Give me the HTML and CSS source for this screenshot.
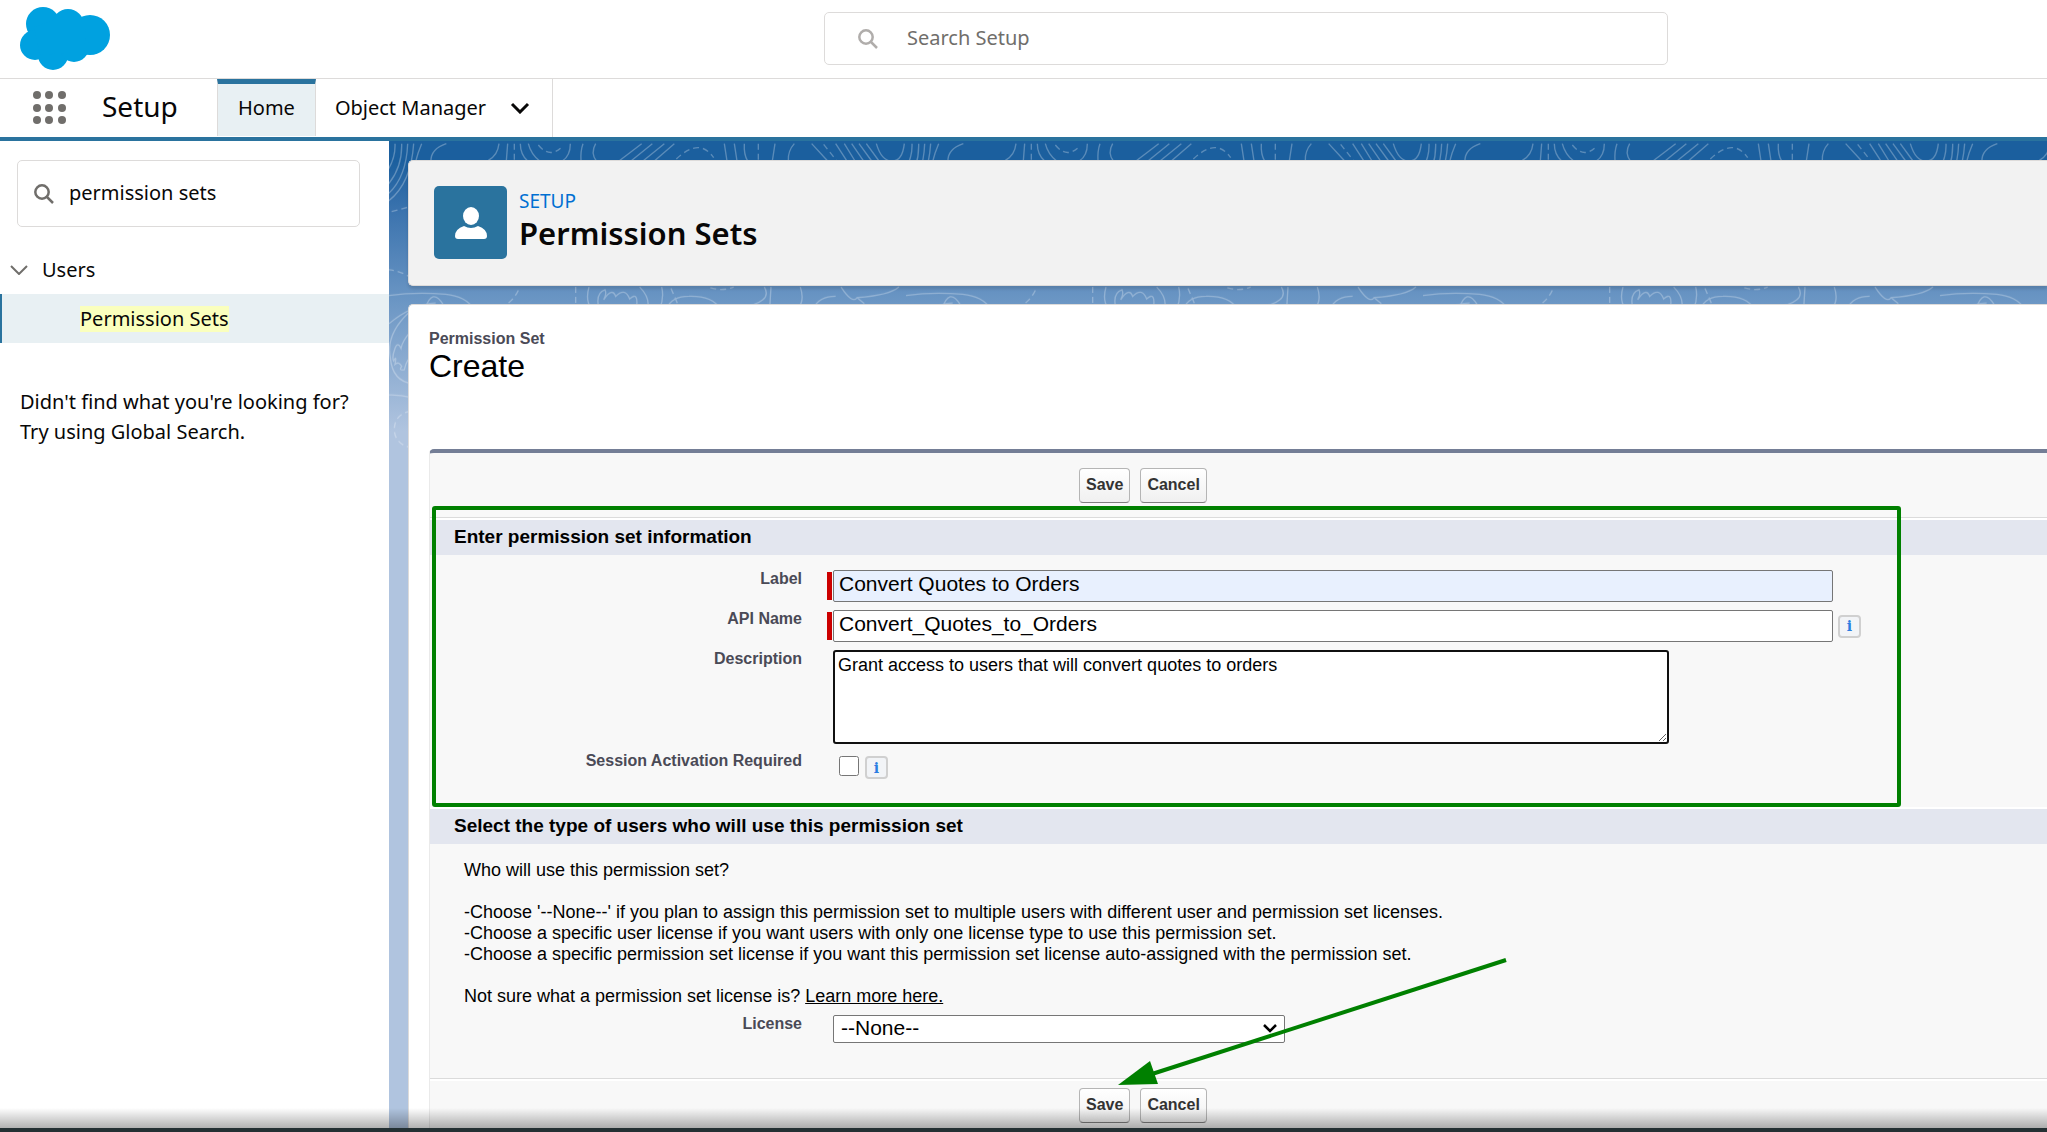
FILE: index.html
```html
<!DOCTYPE html>
<html lang="en">
<head>
<meta charset="utf-8">
<title>Permission Sets | Setup</title>
<link rel="stylesheet" href="styles.css">
</head>
<body>
<div class="app">
  <header class="topbar">
    <svg class="logo" viewBox="0 0 90 63" aria-label="Home" role="img">
      <g fill="#00a1e0">
        <circle cx="23" cy="17" r="17"/><circle cx="48" cy="18" r="16"/><circle cx="70" cy="28" r="20"/>
        <circle cx="15" cy="38" r="15"/><circle cx="33" cy="48" r="15"/><circle cx="54" cy="40" r="15"/>
        <path d="M14 20 30 14H50L66 22 64 46H44L20 48Z"/>
      </g>
    </svg>
    <label class="search search-global">
      <svg class="icon-search" viewBox="0 0 20 20" aria-hidden="true"><circle cx="8" cy="8" r="6.7"/><path d="M13 13l6 6"/></svg>
      <input type="search" placeholder="Search Setup" aria-label="Search Setup">
    </label>
  </header>

  <nav class="navbar">
    <button class="launcher" aria-label="App Launcher">
      <svg viewBox="0 0 34 34" aria-hidden="true">
        <g fill="#706e6b">
          <circle cx="4" cy="4" r="4"/><circle cx="16" cy="4" r="4"/><circle cx="29" cy="4" r="4"/>
          <circle cx="4" cy="17" r="4"/><circle cx="16" cy="17" r="4"/><circle cx="29" cy="17" r="4"/>
          <circle cx="4" cy="29" r="4"/><circle cx="16" cy="29" r="4"/><circle cx="29" cy="29" r="4"/>
        </g>
      </svg>
    </button>
    <span class="app-name">Setup</span>
    <a class="tab tab-active" href="#home">Home</a>
    <a class="tab tab-menu" href="#objects">Object Manager
      <svg class="tab-chevron" viewBox="0 0 20 12" aria-hidden="true"><path d="M2 2l8 8 8-8"/></svg>
    </a>
  </nav>

  <div class="workspace">
    <aside class="sidebar">
      <label class="search search-side">
        <svg class="icon-search" viewBox="0 0 20 20" aria-hidden="true"><circle cx="8" cy="8" r="6.7"/><path d="M13 13l6 6"/></svg>
        <input type="search" value="permission sets" aria-label="Quick Find">
      </label>
      <button class="tree-group">
        <svg viewBox="0 0 18 10" aria-hidden="true"><path d="M1 1l8 8 8-8"/></svg>Users
      </button>
      <a class="tree-item" href="#permission-sets"><mark>Permission Sets</mark></a>
      <p class="hint">Didn't find what you're looking for?<br>Try using Global Search.</p>
    </aside>

    <main class="content">
      <svg class="contours" aria-hidden="true">
        <defs>
          <pattern id="topo" width="1551" height="1400" patternUnits="userSpaceOnUse" patternTransform="scale(.33333)">
            <g fill="none" stroke="#fff" stroke-width="4" opacity=".28">
              <path d="M18 8Q20 50-4 88M38 8Q40 80-4 132M56 8Q52 110-4 160M74 8Q66 130-4 182"/>
              <path d="M98 8Q86 36 80 62M172 8Q124 24 126 62M330 8Q326 44 298 58M356 8L352 60M394 8Q394 40 416 60M418 8Q426 40 452 60M544 8Q544 44 520 60M582 8Q574 30 576 60M620 8Q604 36 622 60"/>
              <path d="M758 8L690 60M790 8L726 60M826 8L762 60M856 8L796 60M1006 8L1014 60M1036 8L1044 60M1066 8Q1064 40 1076 60M1158 8L1150 60M1216 8Q1196 30 1198 60M1268 8L1316 60M1340 8L1374 60M1366 8L1398 60M1388 8L1424 60M1410 8L1448 60M1432 8L1470 60M1462 8Q1478 62 1510 60Q1540 60 1546 8"/>
              <path stroke-dasharray="18 12" d="M376 8V60M448 12Q484 56 522 14M862 54Q932-12 974 50M1108 8V60M1304 10L1342 58M8 212L74 194M-4 386Q36 390 62 408"/>
              <path d="M-4 464Q80 452 170 460Q230 466 254 504M108 504Q130 438 162 490M0 548Q70 490 140 486M600 438Q588 480 608 504M630 504Q618 456 648 446Q654 460 644 476Q670 438 680 466Q708 438 722 474Q750 448 742 504M752 438Q784 470 776 504M818 438Q826 470 812 504M832 504Q848 466 900 466Q970 464 994 504M1126 438Q1154 484 1050 502M1146 438L1142 504M1234 438Q1248 480 1226 504M1272 504Q1290 466 1340 466M1356 438Q1390 490 1404 470Q1500 464 1530 438M1404 470L1426 488"/>
              <path stroke-dasharray="18 12" d="M388 448Q368 490 324 504M560 438V504M846 442L870 498M964 440Q1000 452 1034 438"/>
              <path d="M60 514Q-10 580 4 650Q10 720 70 728M66 570Q40 600 36 622Q26 600 18 622Q8 650 14 660Q24 640 18 670Q30 660 38 676Q28 690 46 686Q54 650 70 648M-4 762Q30 760 70 770"/>
              <path stroke-dasharray="18 12" d="M66 810Q14 820 16 870Q20 910 66 920"/>
            </g>
          </pattern>
        </defs>
        <rect width="100%" height="340" fill="url(#topo)"/>
      </svg>

      <header class="page-header">
        <span class="page-icon">
          <svg viewBox="0 0 32 32" aria-hidden="true"><ellipse cx="16" cy="9" rx="8" ry="9"/><path d="M9 19q7 4 14 0 9 3 9 10 0 3-3 3H3q-3 0-3-3 0-7 9-10Z"/></svg>
        </span>
        <div>
          <p class="eyebrow">SETUP</p>
          <h1>Permission Sets</h1>
        </div>
      </header>

      <section class="card">
        <p class="kind">Permission Set</p>
        <h2>Create</h2>

        <form class="block">
          <div class="actions"><button type="button">Save</button><button type="button">Cancel</button></div>

          <section class="group group-info">
            <h3>Enter permission set information</h3>
            <div class="fields">
              <label for="label">Label</label>
              <div class="field required"><input class="text autofilled" id="label" type="text" value="Convert Quotes to Orders"></div>
              <label for="api">API Name</label>
              <div class="field required"><input class="text" id="api" type="text" value="Convert_Quotes_to_Orders"><button class="info" type="button" aria-label="API Name help">i</button></div>
              <label for="desc">Description</label>
              <div class="field"><textarea id="desc">Grant access to users that will convert quotes to orders</textarea></div>
              <label for="session">Session Activation Required</label>
              <div class="field field-check"><input id="session" type="checkbox"><button class="info" type="button" aria-label="Session activation help">i</button></div>
            </div>
            <div class="highlight"></div>
          </section>

          <section class="group group-license">
            <h3>Select the type of users who will use this permission set</h3>
            <div class="copy">
              <p>Who will use this permission set?</p>
              <p>-Choose '--None--' if you plan to assign this permission set to multiple users with different user and permission set licenses.<br>
                -Choose a specific user license if you want users with only one license type to use this permission set.<br>
                -Choose a specific permission set license if you want this permission set license auto-assigned with the permission set.</p>
              <p>Not sure what a permission set license is? <a href="#licenses">Learn more here.</a></p>
            </div>
            <div class="fields fields-license">
              <label for="license">License</label>
              <div class="field"><select id="license"><option>--None--</option></select></div>
            </div>
            <svg class="arrow" viewBox="0 0 392 130" aria-hidden="true"><path d="M388 4 34 118" stroke="green" stroke-width="4"/><path d="M0 129 32 105 40 128Z" fill="green"/></svg>
          </section>

          <div class="actions actions-bottom"><button type="button">Save</button><button type="button">Cancel</button></div>
        </form>
      </section>
    </main>
  </div>
  <div class="dock"></div>
</div>
</body>
</html>
```
FILE: styles.css
```css
* { box-sizing: border-box; }

body {
  margin: 0;
  font: 20px/30px "Noto Sans", sans-serif;
  color: #080707;
  background: #fff;
}

h1, h2, h3, p { margin: 0; }
button, input, select, textarea { font: inherit; color: inherit; margin: 0; }
a { color: inherit; }

.app {
  display: flex;
  flex-direction: column;
  height: 100vh;
  overflow: hidden;
}

/* Global header */
.topbar {
  display: grid;
  grid-template-columns: 824fr 844fr 379fr;
  align-items: start;
  flex: none;
  height: 79px;
  border-bottom: 1px solid #dddbda;
}
.logo { width: 90px; height: 63px; margin: 7px 0 0 20px; }

.search {
  display: flex;
  align-items: center;
  border: 1px solid #dddbda;
  border-radius: 5px;
  background: #fff;
}
.search input {
  flex: 1;
  min-width: 0;
  padding: 0 0 2px;
  border: 0;
  outline: 0;
  background: none;
  appearance: none;
}
.search input::placeholder { color: #706e6b; opacity: 1; }
.icon-search {
  flex: none;
  width: 20px;
  height: 20px;
  fill: none;
  stroke: #706e6b;
  stroke-width: 2.5;
}
.search-global { height: 53px; margin-top: 12px; padding: 0 33px; gap: 29px; }
.search-global .icon-search { stroke: #b0adab; }

/* App navigation */
.navbar {
  display: flex;
  flex: none;
  height: 62px;
  border-bottom: 4px solid #2a739e;
}
.launcher {
  display: flex;
  align-items: flex-start;
  width: 102px;
  padding: 12px 0 0 33px;
  border: 0;
  background: none;
}
.launcher svg { width: 34px; height: 34px; }
.app-name { width: 115px; font-size: 28px; line-height: 54px; }
.tab {
  display: flex;
  align-items: center;
  padding: 0 20px;
  border-right: 1px solid #dddbda;
  text-decoration: none;
}
.tab-active {
  margin-bottom: 1px;
  padding-bottom: 4px;
  border-left: 1px solid #dddbda;
  border-top: 5px solid #2a739e;
  background: #e8f0f3;
}
.tab-menu { gap: 24px; padding: 0 22px 0 19px; }
.tab-chevron { width: 20px; height: 12px; fill: none; stroke: #080707; stroke-width: 3; }

/* Sidebar */
.workspace { display: flex; flex: 1; min-height: 0; }
.sidebar { flex: none; width: 389px; }
.search-side { height: 67px; margin: 19px 29px 28px 17px; padding: 0 16px; gap: 15px; }
.tree-group {
  display: flex;
  align-items: center;
  gap: 14px;
  width: 100%;
  padding: 0 0 0 10px;
  margin-bottom: 9px;
  border: 0;
  background: none;
}
.tree-group svg { width: 18px; height: 10px; fill: none; stroke: #706e6b; stroke-width: 2; }
.tree-item {
  display: flex;
  align-items: center;
  height: 49px;
  padding-left: 78px;
  border-left: 2px solid #2a739e;
  background: #e8f0f3;
  line-height: 26px;
  text-decoration: none;
}
.tree-item mark { background: #faffbd; color: inherit; }
.hint { padding: 44px 20px; }

/* Main area */
.content {
  position: relative;
  flex: 1;
  min-width: 0;
  padding: 19px 0 0 19px;
  background: #b0c4df linear-gradient(#1b5f9e 0, #1b5f9e 20px, #3b73ae 70px, #6b96c4 160px, #b0c4df 290px) no-repeat;
}
.contours { position: absolute; inset: 0; width: 100%; height: 340px; }

.page-header {
  position: relative;
  display: flex;
  gap: 12px;
  height: 126px;
  padding: 25px;
  border: 1px solid #dddbda;
  border-right: 0;
  border-radius: 5px 0 0 5px;
  background: #f2f2f2;
  box-shadow: 0 3px 3px rgba(0, 0, 0, .12);
}
.page-icon {
  display: grid;
  place-items: center;
  width: 73px;
  height: 73px;
  border-radius: 5px;
  background: #2a739e;
}
.page-icon svg { width: 32px; height: 32px; fill: #fff; }
.eyebrow { color: #0070d2; font-size: 19px; }
h1 { font-size: 31px; font-weight: 600; line-height: 34px; }

.card {
  position: relative;
  margin-top: 18px;
  padding: 24px 0 0 20px;
  border: 1px solid #dddbda;
  border-width: 1px 0 0 1px;
  border-radius: 5px 0 0 0;
  background: #fff;
  font: 18px/21px "Liberation Sans", sans-serif;
  color: #000;
}
.kind { color: #4a4a56; font-size: 16px; font-weight: 700; line-height: 20px; }
h2 { font-size: 32px; font-weight: 400; line-height: 34px; }

.block {
  margin-top: 66px;
  border-left: 1px solid #eaeaea;
  border-top: 4px solid #747e96;
  border-radius: 5px 0 0 0;
  background: #f8f8f8;
}
.actions { display: flex; gap: 10px; padding: 15px 0 14px 649px; }
.actions button {
  height: 35px;
  padding: 0 6px 2px;
  border: 1px solid #b5b5b5;
  border-bottom-color: #7f7f7f;
  border-radius: 4px;
  background: linear-gradient(#fff, #f0f0f0);
  color: #333;
  font-size: 16px;
  font-weight: 700;
}
.actions-bottom { padding: 7px 0 40px 649px; border-top: 2px solid #fff; }

.group { position: relative; }
.group-info { border-top: 1px solid #dbdbdb; }
.group-license { border-bottom: 1px solid #dbdbdb; }
h3 {
  border-top: 2px solid #fff;
  padding: 0 24px 2px;
  background: #e3e6ef;
  font-size: 19px;
  line-height: 33px;
}

.fields {
  display: grid;
  grid-template-columns: 372px minmax(0, 1fr);
  gap: 8px 25px;
  padding: 15px 0 28px;
}
.fields label {
  color: #4a4a56;
  font-size: 16px;
  font-weight: 700;
  line-height: 18px;
  text-align: right;
}
.field { display: flex; align-items: center; gap: 5px; padding-left: 6px; }
.required { padding-left: 0; gap: 1px; }
.required::before { content: ""; width: 5px; height: 28px; background: #c00; }
.text {
  width: 1000px;
  height: 32px;
  padding: 0 5px 4px;
  border: 1px solid #767676;
  border-radius: 2px;
  background: #fff;
  font-size: 21px;
}
.autofilled { background: #e8f0fe; }
textarea {
  display: block;
  width: 836px;
  height: 94px;
  padding: 3px;
  border: 2px solid #101010;
  border-radius: 3px;
  outline: 0;
  background: #fff;
}
.field-check { padding: 4px 0 0 12px; gap: 6px; align-items: start; }
.field-check input { width: 20px; height: 20px; }
.info {
  width: 23px;
  height: 23px;
  padding: 0;
  border: 2px solid #d0d0d0;
  border-radius: 4px;
  background: #f2f4f7;
  color: #2a7de1;
  font: 700 14px/18px "DejaVu Serif", serif;
}
.required .info { margin-left: 4px; }

.copy { display: grid; gap: 21px; padding: 16px 34px 0; }
.fields-license { padding: 8px 0 35px; }
select {
  width: 452px;
  height: 28px;
  padding: 0 7px 2px;
  border: 1px solid #767676;
  border-radius: 2px;
  appearance: none;
  background: #fff url("data:image/svg+xml,%3Csvg xmlns='http://www.w3.org/2000/svg' width='16' height='10' fill='none' stroke='black' stroke-width='2.5'%3E%3Cpath d='M2 1l6 6 6-6'/%3E%3C/svg%3E") no-repeat right 6px center;
  font-size: 21px;
  line-height: 24px;
}

/* Annotations laid over the form */
.highlight {
  position: absolute;
  inset: -12px auto 0 2px;
  width: 1469px;
  border: 4px solid green;
  border-radius: 3px;
  pointer-events: none;
}
.arrow {
  position: absolute;
  left: 688px;
  bottom: -8px;
  width: 392px;
  height: 130px;
  fill: none;
  pointer-events: none;
  z-index: 1;
}

/* Bottom edge */
.dock { position: relative; flex: none; height: 4px; background: #243033; }
.dock::before {
  content: "";
  position: absolute;
  inset: -20px 0 auto;
  height: 20px;
  background: linear-gradient(rgba(0, 0, 0, 0), rgba(0, 0, 0, .3));
}
```
